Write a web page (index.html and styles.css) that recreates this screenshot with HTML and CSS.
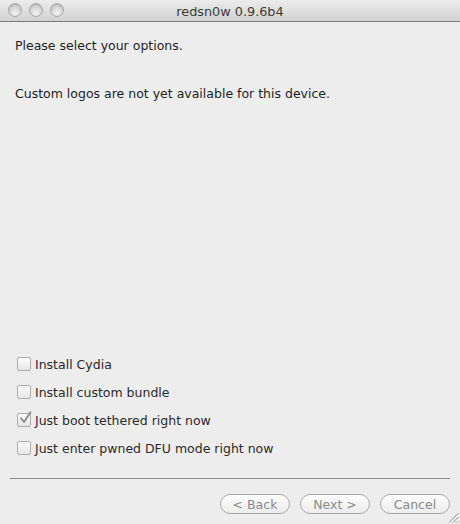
FILE: index.html
```html
<!DOCTYPE html>
<html>
<head>
<meta charset="utf-8">
<link rel="stylesheet" href="styles.css">
</head>
<body>
<div class="window">
  <div class="titlebar">
    <div class="lights">
      <span class="light"></span>
      <span class="light"></span>
      <span class="light"></span>
    </div>
    <div class="title">redsn0w 0.9.6b4</div>
  </div>
  <div class="content">
    <p class="line first">Please select your options.</p>
    <p class="line second">Custom logos are not yet available for this device.</p>
    <div class="spacer"></div>
    <div class="options">
      <label class="opt"><span class="box"></span>Install Cydia</label>
      <label class="opt"><span class="box"></span>Install custom bundle</label>
      <label class="opt"><span class="box checked"><svg width="14" height="14" viewBox="0 0 14 14"><path d="M3 7.2 L6 11 L12.5 1.2" fill="none" stroke="#8a8a8a" stroke-width="1.8" stroke-linecap="round" stroke-linejoin="round"/></svg></span>Just boot tethered right now</label>
      <label class="opt"><span class="box"></span>Just enter pwned DFU mode right now</label>
    </div>
    <div class="sep"></div>
    <div class="buttons">
      <span class="btn">&lt; Back</span>
      <span class="btn">Next &gt;</span>
      <span class="btn">Cancel</span>
    </div>
  </div>
  <svg class="grip" width="11" height="11" viewBox="0 0 11 11">
    <path d="M10.5 1 L1 10.5 M10.5 5 L5 10.5 M10.5 9 L9 10.5" stroke="#8c8c8c" stroke-width="1" fill="none"/>
  </svg>
</div>
</body>
</html>
```
FILE: styles.css
```css
html, body {
  margin: 0;
  padding: 0;
  background: #ededed;
}
.window {
  position: relative;
  width: 460px;
  height: 524px;
  display: flex;
  flex-direction: column;
  font-family: "DejaVu Sans", "Liberation Sans", sans-serif;
  font-size: 12.5px;
  color: #222;
  overflow: hidden;
}
.titlebar {
  height: 21px;
  flex: none;
  position: relative;
  background: linear-gradient(#ececec, #d2d2d2);
  border-bottom: 1px solid #7b7b7b;
  display: flex;
  align-items: center;
  justify-content: center;
}
.lights {
  position: absolute;
  left: 8px;
  top: 3px;
  display: flex;
  gap: 7px;
}
.light {
  width: 12px;
  height: 12px;
  border-radius: 50%;
  border: 1px solid #a9a9a9;
  background: radial-gradient(circle at 50% 75%, #f4f4f4 0, #dadada 45%, #c4c4c4 100%);
  box-shadow: inset 0 1px 1px rgba(0,0,0,0.15);
}
.title {
  font-size: 12.8px;
  color: #3a3a3a;
  margin-top: 1px;
}
.content {
  flex: 1;
  display: flex;
  flex-direction: column;
  padding: 0 10px 0 10px;
}
.line {
  margin: 0;
  padding-left: 5px;
  line-height: 16px;
  color: #1e1e1e;
}
.first { margin-top: 16px; }
.second { margin-top: 32px; }
.spacer { flex: 1; }
.options {
  display: flex;
  flex-direction: column;
  gap: 12px;
  padding-left: 7px;
}
.opt {
  display: flex;
  align-items: center;
  height: 16px;
  color: #2a2a2a;
}
.box {
  width: 12px;
  height: 12px;
  border: 1px solid #ababab;
  border-radius: 2px;
  background: linear-gradient(#fbfbfb, #e6e6e6);
  margin-right: 4px;
  position: relative;
  flex: none;
}
.box svg {
  position: absolute;
  left: 0;
  top: -3px;
}
.sep {
  height: 1px;
  background: #8a8a8a;
  margin-top: 22px;
}
.buttons {
  display: flex;
  justify-content: flex-end;
  gap: 10px;
  margin-top: 15px;
  margin-bottom: 10px;
}
.btn {
  width: 68px;
  height: 18px;
  border: 1px solid #a8a8a8;
  border-radius: 10px;
  background: linear-gradient(#fdfdfd, #ececec);
  color: #8a8a8a;
  font-size: 12.5px;
  display: flex;
  align-items: center;
  justify-content: center;
}
.grip {
  position: absolute;
  right: 1px;
  bottom: 1px;
}
```
